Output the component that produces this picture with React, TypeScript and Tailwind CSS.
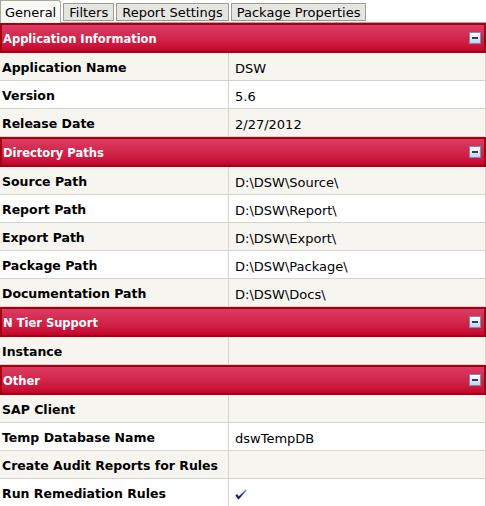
import React from "react";

type Row = { label: string; value?: string; check?: boolean };
type Section = { title: string; rows: Row[] };

const sections: Section[] = [
  {
    title: "Application Information",
    rows: [
      { label: "Application Name", value: "DSW" },
      { label: "Version", value: "5.6" },
      { label: "Release Date", value: "2/27/2012" },
    ],
  },
  {
    title: "Directory Paths",
    rows: [
      { label: "Source Path", value: "D:\\DSW\\Source\\" },
      { label: "Report Path", value: "D:\\DSW\\Report\\" },
      { label: "Export Path", value: "D:\\DSW\\Export\\" },
      { label: "Package Path", value: "D:\\DSW\\Package\\" },
      { label: "Documentation Path", value: "D:\\DSW\\Docs\\" },
    ],
  },
  { title: "N Tier Support", rows: [{ label: "Instance" }] },
  {
    title: "Other",
    rows: [
      { label: "SAP Client" },
      { label: "Temp Database Name", value: "dswTempDB" },
      { label: "Create Audit Reports for Rules" },
      { label: "Run Remediation Rules", check: true },
    ],
  },
];

const tabs = ["General", "Filters", "Report Settings", "Package Properties"];

function MinusIcon() {
  return (
    <span className="flex h-[12px] w-[12px] items-center justify-center border border-[#7f8ea8] bg-gradient-to-b from-white to-[#c3d1ea]">
      <span className="h-[2px] w-[6px] bg-[#2e3d66]" />
    </span>
  );
}

function Check() {
  return (
    <svg width="12" height="11" viewBox="0 0 12 11" aria-hidden>
      <defs>
        <linearGradient id="chk" x1="0" y1="1" x2="1" y2="0">
          <stop offset="0.35" stopColor="#1c2288" />
          <stop offset="1" stopColor="#9a9ce0" />
        </linearGradient>
      </defs>
      <path d="M0.3 6.6 L3.4 10.8 L11.8 1.6 L10.6 0.4 L3.8 7.2 L2.1 5 Z" fill="url(#chk)" />
    </svg>
  );
}

export default function App() {
  return (
    <div className="w-[486px] bg-white font-['DejaVu_Sans',sans-serif] text-[12px] text-black">
      <div className="flex h-[23px] items-end gap-[2px] border-b border-[#a8a8a0]">
        {tabs.map((t, i) =>
          i === 0 ? (
            <div
              key={t}
              className="-mb-px flex h-[23px] items-start rounded-tr-[3px] border border-b-0 border-[#a8a8a0] bg-[#f8f8f4] px-[4px] pt-[2px] text-[13px]"
            >
              {t}
            </div>
          ) : (
            <div
              key={t}
              className="mb-[1px] flex h-[18px] items-center border border-[#9c9c94] bg-[#e6e6e0] px-[5px] pt-[1px] text-[13px]"
            >
              {t}
            </div>
          )
        )}
      </div>
      {sections.map((s) => (
        <div key={s.title}>
          <div className="flex h-[30px] items-center justify-between border-2 border-[#a5000f] bg-gradient-to-b from-[#dc3a64] to-[#c7002f] pl-[1px] pr-[3px]">
            <span className="pt-[4px] text-[11.5px] font-bold text-white">{s.title}</span>
            <MinusIcon />
          </div>
          {s.rows.map((r, i) => (
            <div
              key={r.label}
              className={`flex h-[28px] border-b border-r border-[#d4d4cc] ${
                i % 2 === 0 ? "bg-[#f6f5ef]" : "bg-white"
              }`}
            >
              <div className="flex w-[229px] items-center border-r border-[#d4d4cc] pl-[2px] pt-[4px] text-[12.5px] font-bold">
                {r.label}
              </div>
              <div className="flex flex-1 items-center pl-[6px] pt-[4px] text-[13px]">
                {r.check ? <Check /> : r.value}
              </div>
            </div>
          ))}
        </div>
      ))}
    </div>
  );
}
